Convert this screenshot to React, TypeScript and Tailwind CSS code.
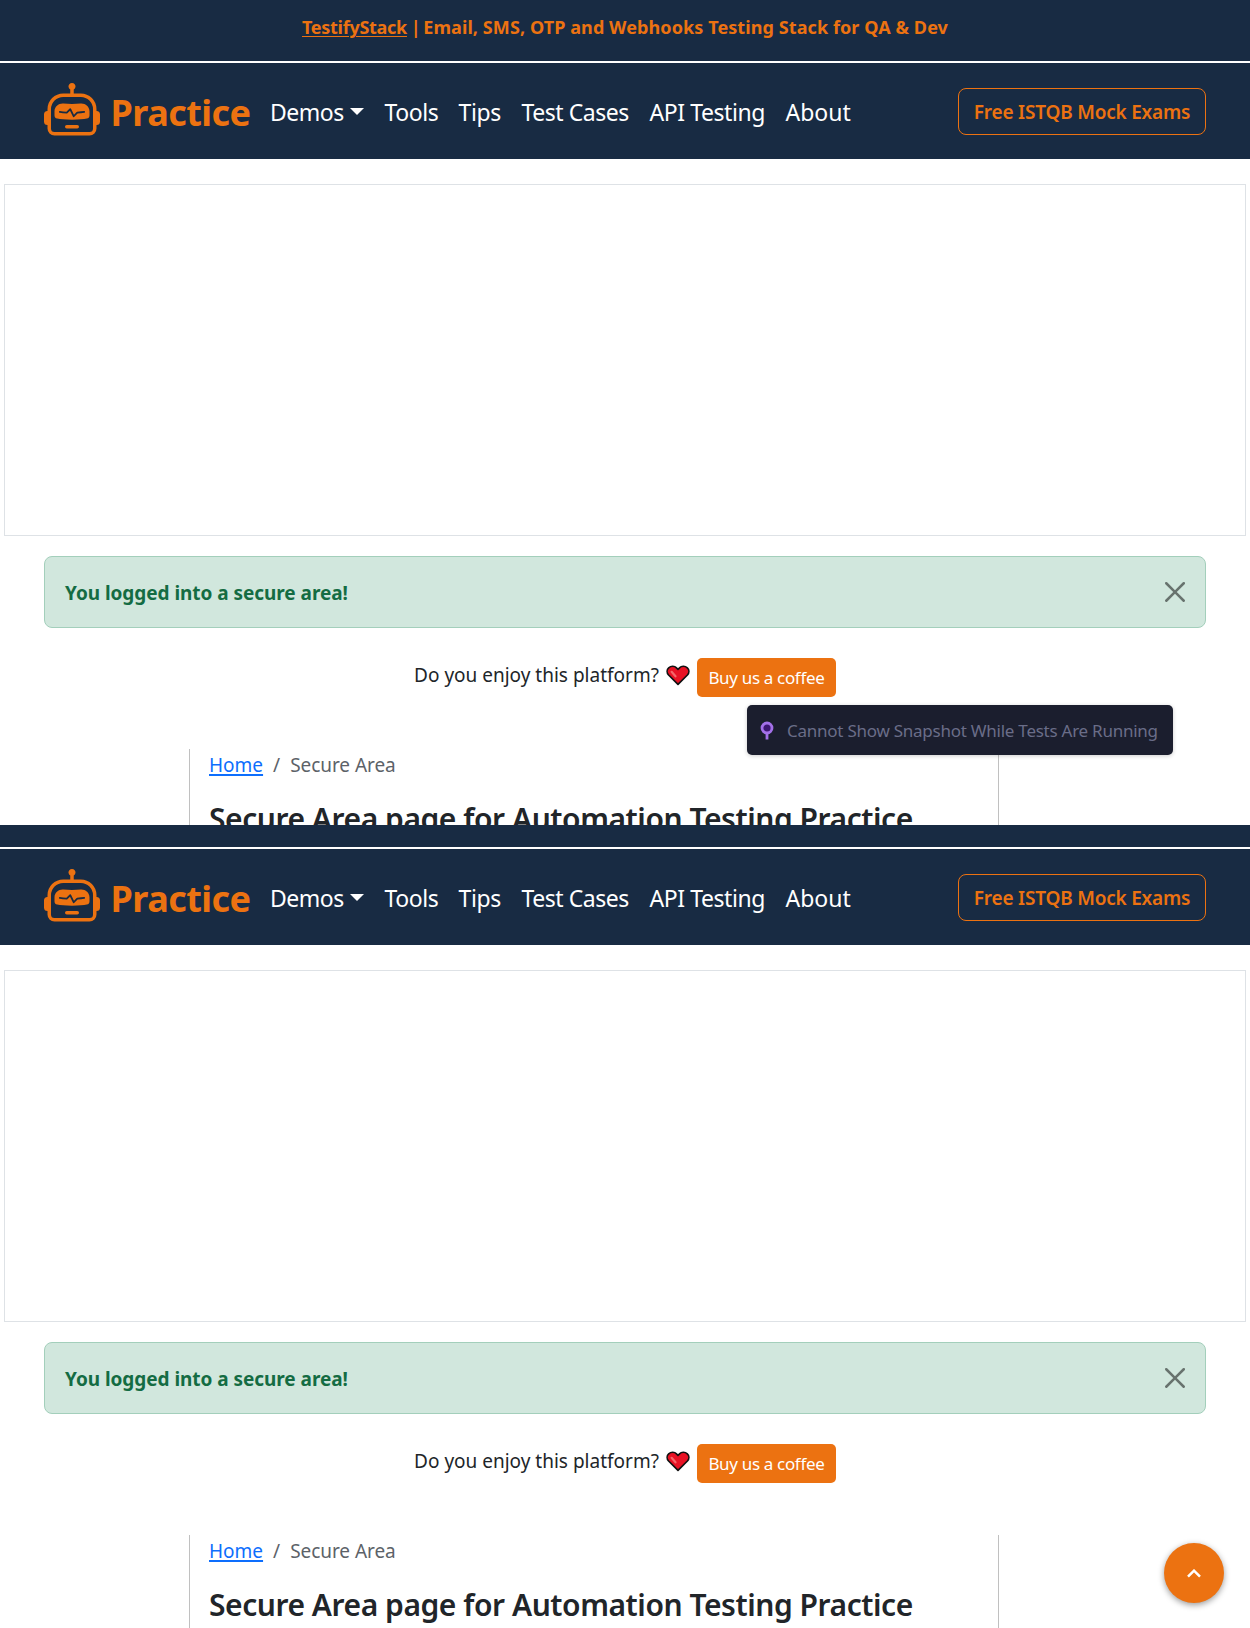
import { BsRobot } from "react-icons/bs";

const navItems = [
  { label: "Tools", cls: "w-[74px] tracking-[-0.45px]" },
  { label: "Tips", cls: "w-[63px] tracking-[-0.4px]" },
  { label: "Test Cases", cls: "w-[128px] tracking-[-0.45px]" },
  { label: "API Testing", cls: "w-[136px] tracking-[-0.43px]" },
  { label: "About", cls: "w-[70px]" },
];

function Heart() {
  return (
    <svg className="ml-[7px] mt-[7px] h-[21px] w-[24px] shrink-0" viewBox="0 0 24 21">
      <path
        d="M12 19.4 2.6 10C.6 7.7.7 4.6 2.7 2.8 5 .7 8.5.8 10.5 2.9L12 4.400l1.500-1.500c2-2.100 5.500-2.200 7.800-.1 2 1.800 2.100 4.900.1 7.200z"
        fill="#e81224"
        stroke="#111"
        strokeWidth="1.7"
        strokeLinejoin="round"
      />
      <path d="M5.600 6.800 9.500 11.300" stroke="#f4676a" strokeWidth="2.2" strokeLinecap="round" />
    </svg>
  );
}

function TopBanner() {
  return (
    <div className="h-[61px] shrink-0 bg-[#182b43] text-center text-[18px] font-bold leading-[54px] whitespace-nowrap text-[#ec7211]">
      <a className="tracking-[-0.28px] underline decoration-1 underline-offset-2">TestifyStack</a>
      <span className="tracking-[-1px]"> | </span>
      <span className="tracking-[0.09px]">Email, SMS, OTP and Webhooks Testing Stack for QA &amp; Dev</span>
    </div>
  );
}

function Navbar() {
  return (
    <nav className="mt-[2px] flex h-24 shrink-0 items-center bg-[#182b43] px-11 whitespace-nowrap">
      <BsRobot className="size-14 shrink-0 text-[#ec7211]" />
      <span className="mt-[4px] ml-[10.5px] w-[159.5px] text-[36px] font-bold leading-[48px] tracking-[-0.55px] text-[#ec7211]">
        Practice
      </span>
      <div className="mt-[2px] flex text-[23px] leading-8 text-white">
        <span className="flex w-[114.5px] items-center tracking-[-0.5px]">
          Demos
          <span className="mt-[-2px] ml-[6px] border-x-[7px] border-t-[7px] border-x-transparent border-t-white" />
        </span>
        {navItems.map((n) => (
          <span key={n.label} className={n.cls}>
            {n.label}
          </span>
        ))}
      </div>
      <button className="ml-auto h-[47px] w-[248px] rounded-[8px] border border-[#ec7211] pt-px text-[19px] font-semibold leading-[44px] tracking-[-0.2px] text-[#ec7211]">
        Free ISTQB Mock Exams
      </button>
    </nav>
  );
}

function SecurePage({ scrolled = false }: { scrolled?: boolean }) {
  return (
    <div className={scrolled ? "flex h-[803px] flex-col overflow-hidden" : "flex h-[825px] flex-col overflow-hidden"}>
      {scrolled ? <div className="h-[22px] shrink-0 bg-[#182b43]" /> : <TopBanner />}
      <Navbar />
      <div className="mx-1 mt-[25px] h-[352px] shrink-0 border border-[#dee2e6]" />
      <div className="mx-11 mt-5 flex h-[72px] shrink-0 items-center justify-between rounded-[8px] border border-[#a3cfbb] bg-[#d1e7dd] px-5 text-[#146c43]">
        <span className="mt-[2px] text-[19px] font-bold leading-[30px] tracking-[-0.05px]">
          You logged into a secure area!
        </span>
        <svg className="size-5 opacity-50" viewBox="0 0 16 16" fill="#000">
          <path d="M.293.293a1 1 0 0 1 1.414 0L8 6.586 14.293.293a1 1 0 1 1 1.414 1.414L9.414 8l6.293 6.293a1 1 0 0 1-1.414 1.414L8 9.414l-6.293 6.293a1 1 0 0 1-1.414-1.414L6.586 8 .293 1.707a1 1 0 0 1 0-1.414" />
        </svg>
      </div>
      <div className="mt-[30px] flex h-[39px] shrink-0 items-start justify-center whitespace-nowrap text-[#212529]">
        <span className="mt-[2px] text-[19px] leading-[30px]">Do you enjoy this platform?</span>
        <Heart />
        <button className="ml-[7px] h-[39px] w-[139px] rounded-[5px] bg-[#ec7211] pb-px text-[17px] leading-[37px] tracking-[-0.33px] text-white">
          Buy us a coffee
        </button>
      </div>
      <div className="mt-[52px] ml-[189px] w-[810px] grow border-x border-[#c0c0c0] pl-[19px] whitespace-nowrap">
        <div className="mt-px flex text-[19px] leading-[30px] text-[#5c6268]">
          <a className="text-[#0d6efd] underline decoration-2 underline-offset-2">Home</a>
          <span className="mx-[10px]">/</span>
          <span className="tracking-[-0.05px]">Secure Area</span>
        </div>
        <h1 className="mt-[21px] text-[30px] font-semibold leading-9 tracking-[-0.45px] text-[#212529]">
          Secure Area page for Automation Testing Practice
        </h1>
      </div>
    </div>
  );
}

function SnapshotTooltip() {
  return (
    <div className="absolute top-[705px] left-[747px] flex h-[50px] w-[426px] items-center rounded-[5px] bg-[#1b1e2e] whitespace-nowrap shadow-[0_1px_4px_rgba(0,0,0,0.2)]">
      <svg className="ml-[13px] h-[19px] w-[14px]" viewBox="0 0 14 19">
        <path d="M7 11v7.500" stroke="#a370e8" strokeWidth="2.8" />
        <circle cx="7" cy="7" r="5" fill="#3d1672" stroke="#a370e8" strokeWidth="2.8" />
      </svg>
      <span className="mt-px ml-[13px] text-[17px] leading-6 tracking-[-0.25px] text-[#6a6d88]">
        Cannot Show Snapshot While Tests Are Running
      </span>
    </div>
  );
}

export default function App() {
  return (
    <div className="relative h-[1628px] w-[1250px] overflow-hidden bg-white font-['Noto_Sans',sans-serif]">
      <SecurePage />
      <SecurePage scrolled />
      <SnapshotTooltip />
      <button className="absolute top-[1543px] left-[1164px] flex size-[60px] items-center justify-center rounded-full bg-[#ec7211] shadow-[0_2px_6px_rgba(0,0,0,0.4)]">
        <svg className="mt-px h-[9px] w-[14px]" viewBox="0 0 14 9" fill="none">
          <path d="m1 7.700 6-6 6 6" stroke="#fff" strokeWidth="2.5" />
        </svg>
      </button>
    </div>
  );
}
